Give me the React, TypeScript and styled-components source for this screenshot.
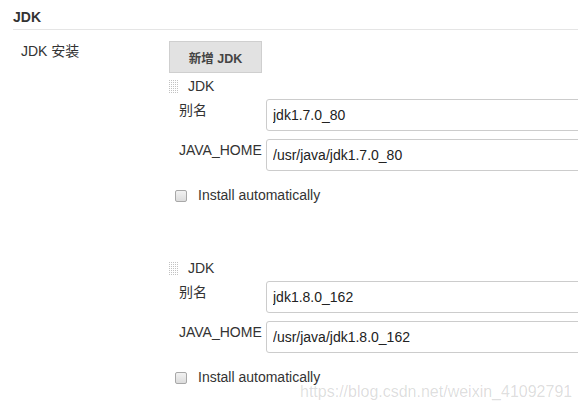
import React from "react";
import styled, { createGlobalStyle } from "styled-components";

const GlobalStyle = createGlobalStyle`
  html, body {
    margin: 0;
    padding: 0;
    background: #fff;
    overflow: hidden;
  }
  body {
    font-family: "Liberation Sans", Arial, "Noto Sans CJK SC", sans-serif;
    font-size: 14px;
    line-height: 17px;
    color: #333;
  }
`;

const Page = styled.div`
  position: relative;
  width: 578px;
  height: 409px;
  overflow: hidden;
`;

const SectionHeader = styled.div`
  margin-left: 13px;
  padding: 9px 0 3px;
  font-weight: bold;
  color: #333;
  border-bottom: 1px solid #e5e5e5;
`;

const SettingRow = styled.div`
  display: flex;
  padding-top: 11px;
`;

const SettingLabel = styled.div`
  width: 169px;
  flex-shrink: 0;
  padding: 2px 0 0 21px;
  box-sizing: border-box;
`;

const SettingBody = styled.div`
  display: flex;
  flex-direction: column;
  align-items: flex-start;
`;

const AddButton = styled.button`
  width: 93px;
  height: 32px;
  padding: 0;
  margin-bottom: 5px;
  background: #e2e2e2;
  border: 1px solid #cfcfcf;
  border-radius: 0;
  font-family: inherit;
  font-size: 12.5px;
  font-weight: bold;
  color: #444;
`;

const InstallList = styled.div`
  display: flex;
  flex-direction: column;
  gap: 56px;
`;

const Installation = styled.div`
  display: flex;
  flex-direction: column;
`;

const InstallHeader = styled.div`
  display: flex;
  align-items: center;
  height: 17px;
  margin-bottom: 4px;
`;

const HandleIcon = styled.svg`
  display: block;
  margin-right: 9px;
  flex-shrink: 0;
`;

const Fields = styled.div`
  display: flex;
  flex-direction: column;
  gap: 8px;
`;

const FieldRow = styled.div`
  display: flex;
  align-items: flex-start;
`;

const FieldLabel = styled.label`
  width: 97px;
  flex-shrink: 0;
  padding: 3px 0 0 10px;
  box-sizing: border-box;
`;

const TextInput = styled.input`
  width: 420px;
  height: 32px;
  box-sizing: border-box;
  padding: 0 6px;
  border: 1px solid #ccc;
  border-radius: 3px;
  font-family: inherit;
  font-size: 14px;
  color: #222;
  background: #fff;
  outline: none;
`;

const CheckRow = styled.label`
  display: flex;
  align-items: center;
  margin: 16px 0 0 6px;
`;

const Checkbox = styled.span`
  width: 12px;
  height: 12px;
  box-sizing: border-box;
  border: 1px solid #a8a8a8;
  border-radius: 2px;
  background: linear-gradient(#f2f2f2, #dcdcdc);
  margin-right: 11px;
`;

const Watermark = styled.div`
  position: absolute;
  left: 300px;
  top: 383px;
  font-size: 16px;
  line-height: 18px;
  color: rgba(0, 0, 0, 0.14);
  white-space: nowrap;
  pointer-events: none;
`;

type Jdk = { name: string; home: string };

const jdks: Jdk[] = [
  { name: "jdk1.7.0_80", home: "/usr/java/jdk1.7.0_80" },
  { name: "jdk1.8.0_162", home: "/usr/java/jdk1.8.0_162" },
];

// dotted grip drawn as a 5x7 grid of 1px dots
function DragHandle() {
  const dots = [];
  for (let r = 0; r < 7; r++) {
    for (let c = 0; c < 5; c++) {
      dots.push(<rect key={`${r}-${c}`} x={c * 2} y={r * 2} width={1} height={1} fill="#c2c2c2" />);
    }
  }
  return (
    <HandleIcon width="10" height="14" viewBox="0 0 10 14">
      {dots}
    </HandleIcon>
  );
}

function JdkInstallation({ jdk }: { jdk: Jdk }) {
  return (
    <Installation>
      <InstallHeader>
        <DragHandle />
        JDK
      </InstallHeader>
      <Fields>
        <FieldRow>
          <FieldLabel>别名</FieldLabel>
          <TextInput defaultValue={jdk.name} />
        </FieldRow>
        <FieldRow>
          <FieldLabel>JAVA_HOME</FieldLabel>
          <TextInput defaultValue={jdk.home} />
        </FieldRow>
      </Fields>
      <CheckRow>
        <Checkbox />
        Install automatically
      </CheckRow>
    </Installation>
  );
}

export default function App() {
  return (
    <Page>
      <GlobalStyle />
      <SectionHeader>JDK</SectionHeader>
      <SettingRow>
        <SettingLabel>JDK 安装</SettingLabel>
        <SettingBody>
          <AddButton>新增 JDK</AddButton>
          <InstallList>
            {jdks.map((jdk) => (
              <JdkInstallation key={jdk.name} jdk={jdk} />
            ))}
          </InstallList>
        </SettingBody>
      </SettingRow>
      <Watermark>https://blog.csdn.net/weixin_41092791</Watermark>
    </Page>
  );
}
